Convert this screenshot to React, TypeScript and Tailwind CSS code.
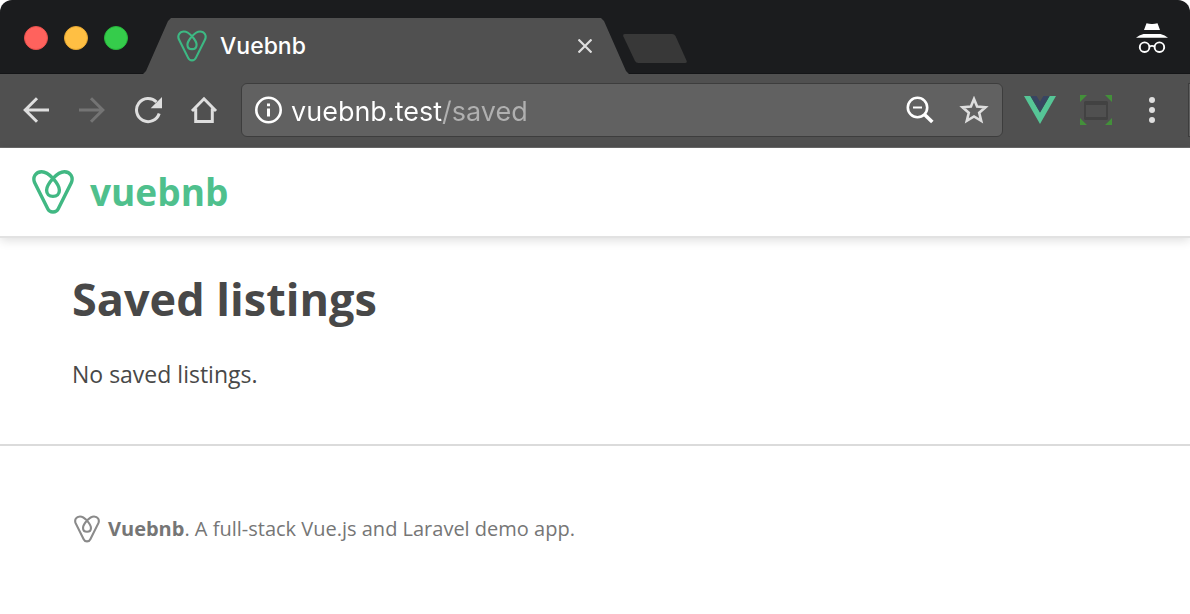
import type { ReactNode } from "react";

function VuebnbLogo({ className, strokeWidth = 3.4 }: { className: string; strokeWidth?: number }) {
  return (
    <svg viewBox="0 0 42 44" className={className} fill="none" stroke="currentColor" strokeWidth={strokeWidth} aria-hidden="true">
      <path d="M21 8.4C17 4 13.2 1.700 9.600 1.700C3.600 1.700 .4 7.200 2.600 12.600L15.600 38.600C17.700 43.200 24.300 43.200 26.400 38.600L39.400 12.600C41.600 7.200 38.400 1.700 32.400 1.700C28.800 1.700 25 4 21 8.400C17.200 12.700 14.600 16.800 14.600 20.200C14.600 24 17.200 26.400 21 26.400C24.800 26.400 27.400 24 27.400 20.200C27.400 16.800 24.800 12.700 21 8.400Z" />
    </svg>
  );
}

function ToolButton({ label, disabled, children }: { label: string; disabled?: boolean; children: ReactNode }) {
  return (
    <button
      type="button"
      aria-label={label}
      disabled={disabled}
      className="flex h-14 w-14 shrink-0 items-center justify-center text-[#dedede] disabled:text-[#747474]"
    >
      {children}
    </button>
  );
}

function TabStrip() {
  return (
    <div className="flex h-[74px] items-end rounded-t-xl border-b border-[#141517] bg-[#1b1c1e]">
      <div className="flex shrink-0 gap-4 self-start pt-[26px] pr-[15px] pl-6">
        <button type="button" aria-label="Close window" className="h-6 w-6 rounded-full border border-[#e8504c] bg-[#ff625d]" />
        <button type="button" aria-label="Minimise window" className="h-6 w-6 rounded-full border border-[#e5a632] bg-[#ffbf43]" />
        <button type="button" aria-label="Zoom window" className="h-6 w-6 rounded-full border border-[#27b63b] bg-[#35cc4b]" />
      </div>
      <div className="-mb-px flex h-14 w-[486px] items-center bg-[#505050] pr-8 pl-[34px] [clip-path:polygon(0_100%,3px_53px,25px_3px,28px_0,458px_0,461px_3px,483px_53px,100%_100%)]">
        <VuebnbLogo className="h-8 w-[30px] text-[#3db883]" strokeWidth={3} />
        <span className="ml-[13px] flex-1 font-[Inter,sans-serif] text-[23px] leading-8 font-medium text-white">Vuebnb</span>
        <button type="button" aria-label="Close tab" className="flex h-6 w-6 items-center justify-center text-[#dedede]">
          <svg viewBox="0 0 14 14" className="h-[14px] w-[14px]" stroke="currentColor" strokeWidth="2.200" aria-hidden="true">
            <path d="M.5 .5L13.500 13.500M13.500 .5L.5 13.500" />
          </svg>
        </button>
      </div>
      <button type="button" aria-label="New tab" className="-ml-1.5 self-start pt-[34px]">
        <svg viewBox="0 0 64 29" className="h-[29px] w-16" fill="#383838" aria-hidden="true">
          <path d="M2 0H49Q51.500 0 52.500 2L63.500 26.500Q64.500 29 62 29H15.500Q13 29 12 27L.4 2.500Q-.5 0 2 0Z" />
        </svg>
      </button>
      <div className="ml-auto self-start pt-[23px] pr-[22px]">
        <svg viewBox="0 0 32 30" className="h-[30px] w-8" aria-label="Incognito" role="img">
          <path fill="#fff" d="M10.500 .2Q13.500 1 16 .9Q18.500 1 21.500 .2L24 7H8ZM7.500 11H24.500Q29 12 32 14.800H0Q3 12 7.500 11Z" />
          <g fill="none" stroke="#fff" strokeWidth="1.900">
            <circle cx="8.600" cy="24.200" r="4.800" />
            <circle cx="23.400" cy="24.200" r="4.800" />
            <path d="M13.300 23.500Q16 22.300 18.700 23.500" />
          </g>
        </svg>
      </div>
    </div>
  );
}

function Toolbar() {
  return (
    <div className="flex h-[74px] items-center border-b border-[#6a6a6a] bg-[#505050] pb-0.5 pl-2">
      <ToolButton label="Back">
        <svg viewBox="0 0 26 26" className="h-[26px] w-[26px]" fill="none" stroke="currentColor" strokeWidth="3" aria-hidden="true">
          <path d="M26 13H2.500M14 1.200L2.200 13L14 24.800" />
        </svg>
      </ToolButton>
      <ToolButton label="Forward" disabled>
        <svg viewBox="0 0 26 26" className="h-[26px] w-[26px]" fill="none" stroke="currentColor" strokeWidth="3" aria-hidden="true">
          <path d="M0 13H23.500M12 1.200L23.800 13L12 24.800" />
        </svg>
      </ToolButton>
      <ToolButton label="Reload">
        <svg viewBox="0 0 28 28" className="h-7 w-7" aria-hidden="true">
          <path fill="none" stroke="currentColor" strokeWidth="3" d="M25.200 17.500A11.600 11.600 0 1 1 22.500 6" />
          <path fill="currentColor" d="M28 1V12.300H16.700Z" />
        </svg>
      </ToolButton>
      <ToolButton label="Home">
        <svg viewBox="0 0 28 28" className="h-7 w-7" fill="none" stroke="currentColor" strokeWidth="3" aria-hidden="true">
          <path d="M2 15L14 2.800L26 15M5.700 12.500V25.500H22.300V12.500" />
        </svg>
      </ToolButton>
      <div className="ml-[9px] flex h-[54px] min-w-0 flex-1 items-center rounded-md border border-[#3d3d3d] bg-[#616161] pr-px pl-[13px]">
        <button type="button" aria-label="Site information" className="shrink-0 text-white">
          <svg viewBox="0 0 28 28" className="h-7 w-7" aria-hidden="true">
            <circle cx="13.500" cy="14" r="12.200" fill="none" stroke="currentColor" strokeWidth="2.600" />
            <path fill="currentColor" d="M12 7.500H15V10.300H12ZM12 12.500H15V20.500H12Z" />
          </svg>
        </button>
        <input
          type="text"
          aria-label="Address"
          defaultValue="vuebnb.test/saved"
          spellCheck={false}
          className="ml-2 h-11 min-w-0 flex-1 bg-[linear-gradient(to_right,#ffffff_151px,#b0b0b0_151px)] bg-clip-text pt-1 font-[Inter,sans-serif] text-[27px] text-transparent caret-white outline-none"
        />
        <button type="button" aria-label="Zoom out" className="flex h-12 w-[54px] shrink-0 items-center justify-center text-white">
          <svg viewBox="0 0 28 28" className="h-7 w-7" fill="none" stroke="currentColor" aria-hidden="true">
            <circle cx="11.500" cy="11.500" r="9.700" strokeWidth="2.600" />
            <path strokeWidth="2" d="M7 11.500H16" />
            <path strokeWidth="3.600" d="M18.500 18.500L26.300 26" />
          </svg>
        </button>
        <button type="button" aria-label="Bookmark this page" className="flex h-12 w-[54px] shrink-0 items-center justify-center text-[#dedede]">
          <svg viewBox="0 0 30 28" className="h-7 w-[30px]" fill="none" stroke="currentColor" strokeWidth="2.600" aria-hidden="true">
            <path d="M15 3L18.100 10.500L26.500 11.200L20.200 16.700L22.200 24.800L15 20.500L7.800 24.800L9.800 16.700L3.500 11.200L11.900 10.500Z" />
          </svg>
        </button>
      </div>
      <div className="ml-[9px] flex shrink-0">
        <ToolButton label="Vue devtools">
          <svg viewBox="0 0 32 28" className="h-7 w-8" aria-hidden="true">
            <path fill="#56c596" d="M0 0H6.400L16 16.500L25.600 0H32L16 28Z" />
            <path fill="#35495e" d="M6.400 0H12.500L16 6L19.500 0H25.600L16 16.500Z" />
            <path fill="#3d3f68" d="M9 0H12.500L16 6L19.500 0H23L16 13Z" opacity=".5" />
          </svg>
        </ToolButton>
        <ToolButton label="Window resizer">
          <svg viewBox="0 0 32 30" className="h-[30px] w-8" aria-hidden="true">
            <path fill="#43903a" d="M0 0H7L0 7ZM25 0H32V7ZM0 23L7 30H0ZM32 23V30H25Z" />
            <path fill="#424242" fillRule="evenodd" d="M5.500 6H26.500Q28 6 28 7.500V23.500Q28 25 26.500 25H5.500Q4 25 4 23.500V7.500Q4 6 5.500 6ZM6 10V22H26V10Z" />
          </svg>
        </ToolButton>
        <ToolButton label="Menu">
          <svg viewBox="0 0 6 26" className="h-[26px] w-1.5" fill="currentColor" aria-hidden="true">
            <circle cx="3" cy="3" r="3" />
            <circle cx="3" cy="13" r="3" />
            <circle cx="3" cy="23" r="3" />
          </svg>
        </ToolButton>
      </div>
      <div className="ml-2 h-[54px] w-0.5 shrink-0 border-y border-l border-[#3d3d3d] bg-[#616161]" />
    </div>
  );
}

export default function App() {
  return (
    <div className="min-h-screen bg-white font-['Open_Sans',sans-serif] text-[#484848]">
      <TabStrip />
      <Toolbar />
      <header className="flex h-[90px] items-center border-b-2 border-[#e2e2e2] px-8 shadow-[0_2px_10px_rgba(0,0,0,0.14)]">
        <a href="#home" className="flex items-center gap-4 text-[#4fc08d]">
          <VuebnbLogo className="h-11 w-[42px] text-[#41b883]" />
          <span className="text-[37px] leading-[50px] font-bold">vuebnb</span>
        </a>
      </header>
      <main className="px-[72px] pt-7 pb-[52px]">
        <h1 className="text-[45px] leading-[66px] font-bold">Saved listings</h1>
        <p className="mt-6 text-[23px] leading-9">No saved listings.</p>
      </main>
      <footer className="border-t-2 border-[#dbdbdb] px-[72px] pt-16 pb-14 text-[#767676]">
        <p className="flex items-center gap-2 pl-0.5 text-xl leading-[38px]">
          <VuebnbLogo className="h-7 w-[26px] text-[#8a8a8a]" strokeWidth={3.4} />
          <span>
            <strong className="font-bold">Vuebnb</strong>. A full-stack Vue.js and Laravel demo app.
          </span>
        </p>
      </footer>
    </div>
  );
}
